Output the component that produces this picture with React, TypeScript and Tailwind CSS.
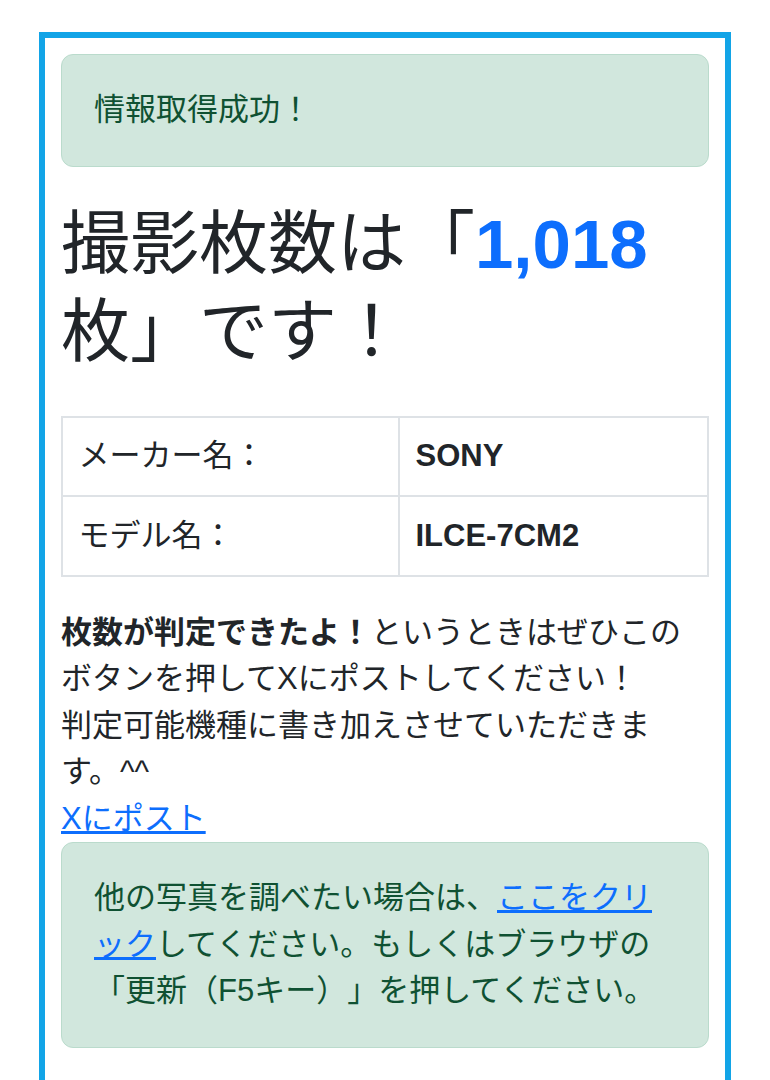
import React from "react";

// Result page after reading the shutter count from an uploaded photo
const info = [
  { label: "メーカー名：", value: "SONY" },
  { label: "モデル名：", value: "ILCE-7CM2" },
];

const Alert = ({ children }: { children: React.ReactNode }) => (
  <div className="rounded-[12px] border border-[#badbcc] bg-[#d1e7dd] px-[32px] py-[32px] text-[#0f5132] leading-[46.5px]">
    {children}
  </div>
);

export default function App() {
  return (
    <div className="min-h-screen bg-white pl-[39px] pt-[32px] text-[31px] text-[#212529] [text-spacing-trim:space-all] font-['Liberation_Sans','Noto_Sans_CJK_JP',sans-serif]">
      <div className="w-[692px] border-[6px] border-[#12a4e7] px-[16px] pb-[60px] pt-[16px]">
        <Alert>情報取得成功！</Alert>

        <h1 className="mt-[34px] mb-[39px] text-[69px] font-normal leading-[88px]">
          撮影枚数は「<span className="font-bold text-[#0d6efd]">1,018</span>枚」です！
        </h1>

        <table className="w-full border-collapse">
          <tbody>
            {info.map((row) => (
              <tr key={row.label}>
                <td className="w-[337px] border-2 border-[#dee2e6] px-[15.5px] py-[15.5px] leading-[46.5px]">
                  {row.label}
                </td>
                <td className="border-2 border-[#dee2e6] px-[15.5px] py-[15.5px] font-bold leading-[46.5px]">
                  {row.value}
                </td>
              </tr>
            ))}
          </tbody>
        </table>

        <p className="mt-[33px] pr-[16px] leading-[46.5px]">
          <strong className="font-bold">枚数が判定できたよ！</strong>
          というときはぜひこのボタンを押してXにポストしてください！
          <br />
          判定可能機種に書き加えさせていただきます。^^
          <br />
          <a href="#" className="text-[#0d6efd] underline">
            Xにポスト
          </a>
        </p>

        <Alert>
          他の写真を調べたい場合は、
          <a href="#" className="text-[#0d6efd] underline">
            ここをクリック
          </a>
          してください。もしくはブラウザの「更新（F5キー）」を押してください。
        </Alert>
      </div>
    </div>
  );
}
